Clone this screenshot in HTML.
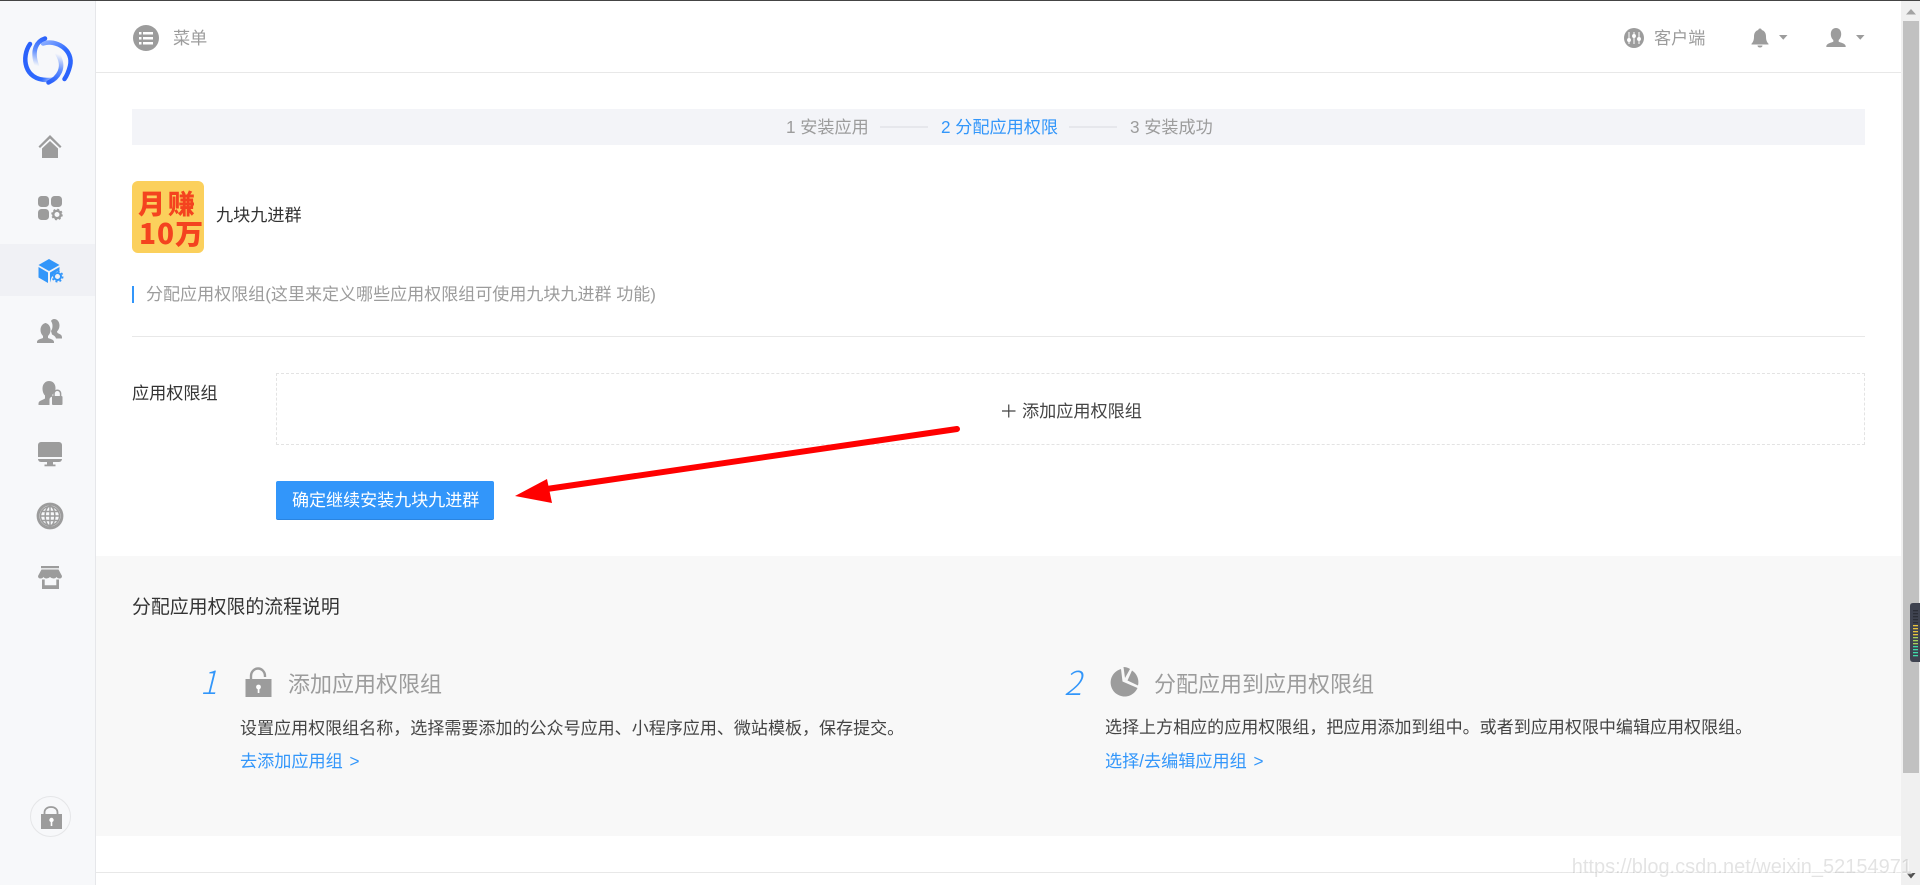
<!DOCTYPE html>
<html lang="zh-CN">
<head>
<meta charset="utf-8">
<title>分配应用权限</title>
<style>
html,body{margin:0;padding:0;width:1920px;height:885px;overflow:hidden;background:#fff}
body{position:relative;font-family:"Liberation Sans","Noto Sans CJK SC",sans-serif;color:#333}
.a{position:absolute}
.t{position:absolute;white-space:nowrap;height:30px;line-height:30px;font-size:17.14px}
.g{color:#9c9c9c}
.b{color:#3296fa}
svg{position:absolute;overflow:visible}
a{color:#3296fa;text-decoration:none;word-spacing:2px}
</style>
</head>
<body>
<!-- sidebar -->
<div class="a" style="left:0;top:0;width:95px;height:885px;background:#f7f8fa;border-right:1px solid #e6e7ea"></div>
<div class="a" style="left:0;top:244px;width:95px;height:52px;background:#f0f1f5"></div>

<!-- main backgrounds -->
<div class="a" style="left:96px;top:72px;width:1805px;height:1px;background:#e8e8e8"></div>
<div class="a" style="left:132px;top:109px;width:1733px;height:36px;background:#f3f4f8"></div>
<div class="a" style="left:132px;top:336px;width:1733px;height:1px;background:#e8e8e8"></div>
<div class="a" style="left:96px;top:556px;width:1805px;height:280px;background:#f8f8f8"></div>
<div class="a" style="left:96px;top:872px;width:1805px;height:1px;background:#e8e8e8"></div>
<div class="a" style="left:0;top:0;width:1920px;height:1px;background:#444"></div>

<!-- logo -->
<svg style="left:0;top:0" width="96" height="96" fill="none" stroke-linecap="round">
<defs>
<linearGradient id="l1" gradientUnits="userSpaceOnUse" x1="26" y1="58" x2="58" y2="80"><stop offset="0" stop-color="#2b62fb"/><stop offset=".65" stop-color="#2f6bff"/><stop offset="1" stop-color="#2f6bff" stop-opacity="0"/></linearGradient>
<linearGradient id="l2" gradientUnits="userSpaceOnUse" x1="42" y1="42" x2="68" y2="78"><stop offset="0" stop-color="#8fb0ff"/><stop offset=".45" stop-color="#2f6bff"/><stop offset="1" stop-color="#2b62fb"/></linearGradient>
<linearGradient id="l3" gradientUnits="userSpaceOnUse" x1="45" y1="38" x2="37" y2="66"><stop offset="0" stop-color="#2b62fb"/><stop offset=".5" stop-color="#2f6bff" stop-opacity=".75"/><stop offset="1" stop-color="#2f6bff" stop-opacity="0"/></linearGradient>
<linearGradient id="l4" gradientUnits="userSpaceOnUse" x1="49" y1="82" x2="58" y2="54"><stop offset="0" stop-color="#2b62fb"/><stop offset=".5" stop-color="#2f6bff" stop-opacity=".75"/><stop offset="1" stop-color="#2f6bff" stop-opacity="0"/></linearGradient>
</defs>
<path d="M30 44C21 57 24 80 47 80Q53 80 58 78.500" stroke="url(#l1)" stroke-width="4.500"/>
<path d="M43 43.500C56 39 74 50 70 66Q68 74 64.500 79" stroke="url(#l2)" stroke-width="4.500"/>
<path d="M45 38.500C37 41 31 50 37 66" stroke="url(#l3)" stroke-width="4.500"/>
<path d="M48.500 82.500C58 78 66 68 57.500 54" stroke="url(#l4)" stroke-width="4.500"/>
</svg>

<!-- sidebar icons -->
<svg style="left:0;top:0" width="96" height="600" fill="#9c9c9c">
<!-- home -->
<path d="M50 135 L38.500 146.500 L40 148 L50 138.500 L60 148 L61.500 146.500Z"/>
<path d="M42 148.500 L50 141 L58 148.500 V158 H42Z"/>
<!-- grid -->
<rect x="38" y="196" width="11" height="11" rx="3.500"/><rect x="51" y="196" width="11" height="11" rx="3.500"/><rect x="38" y="209" width="11" height="11" rx="3.500"/>
<circle cx="57" cy="214.500" r="3.700" fill="none" stroke="#9c9c9c" stroke-width="2.400"/>
<circle cx="57" cy="214.500" r="5" fill="none" stroke="#9c9c9c" stroke-width="1.600" stroke-dasharray="2 1.930"/>
<!-- cube -->
<path d="M49 259 L59.500 265 L49 271 L38.500 265Z" fill="#3296fa"/>
<path d="M38.500 267 L48 272.500 V283 L38.500 277.500Z" fill="#3296fa"/>
<path d="M50 272.500 L59.500 267 V270.500 Q52 273 50.500 281 L50 282.500Z" fill="#3296fa"/>
<circle cx="57.500" cy="276.500" r="3.500" fill="none" stroke="#3296fa" stroke-width="2"/>
<circle cx="57.500" cy="276.500" r="5.200" fill="none" stroke="#3296fa" stroke-width="1.600" stroke-dasharray="2 2.080"/>
<!-- users -->
<path d="M54 319c3.500 0 5.500 3 5.500 6.500 0 2.500-1 4.500-2.500 6l.5 1.500c2 1 4.500 1.500 4.500 4.500v1h-6c-.5-2-2-3-4-4l-1-3.500c1-1.500 1.500-3 1.500-5 0-2-.5-3.500-1.500-5 .8-1.500 2-2 3-2z"/>
<path d="M45.500 323c3.500 0 6 3 6 7 0 2.500-1 4.500-2.500 6v2c2.500 1 6 1.500 6 4v1H38v-1c0-2.500 3.500-3 6-4v-2c-1.500-1.500-2.500-3.500-2.500-6 0-4 2.500-7 6-7z" transform="translate(-1 0)"/>
<!-- user lock -->
<path d="M49 381c4 0 6.500 3 6.500 7 0 3-1.500 5-3 6.500v2c-2 .5-3 1.500-3 3v5.500H38.500v-1.500c0-3 4.500-3.500 6.500-5v-3c-1.500-1.500-2.500-4-2.500-7 0-4.500 3-7.500 6.500-7.500z"/>
<rect x="52" y="396" width="10.500" height="9" rx="1"/>
<path d="M54 396v-2.500a3.300 3.300 0 0 1 6.600 0V396" fill="none" stroke="#9c9c9c" stroke-width="1.500"/>
<!-- monitor -->
<path d="M41 442h18a3 3 0 0 1 3 3v12H38v-12a3 3 0 0 1 3-3z"/>
<path d="M38 459h24v0a3 3 0 0 1-3 3H41a3 3 0 0 1-3-3z"/>
<rect x="47" y="462" width="6" height="3"/><rect x="44.500" y="464.500" width="11" height="1.800"/>
<!-- globe -->
<circle cx="50" cy="516" r="11.700" fill="none" stroke="#9c9c9c" stroke-width="2.400"/>
<g fill="none" stroke="#9c9c9c" stroke-width="1.500">
<circle cx="50" cy="516" r="9.500"/>
<ellipse cx="50" cy="516" rx="4.800" ry="10"/>
<path d="M50 506v20M41 511.500h18M40 516h20M41 520.500h18"/>
</g>
<circle cx="50" cy="516" r="12.900" fill="none" stroke="#9c9c9c" stroke-width="1"/>
<!-- store -->
<rect x="41" y="566" width="18" height="2.200"/>
<path d="M41.500 569.500h17l3.500 6.500q0 2.500-2.500 2.500-2 0-3-1.500-1 1.500-3 1.500t-3.500-1.500q-1.500 1.500-3.500 1.500t-3-1.500q-1 1.500-3 1.500-2.500 0-2.500-2.500z"/>
<path d="M42 579.500v9.500h17v-9.500h-2.700v5.700H44.700v-5.700z"/>
</svg>

<!-- bottom lock -->
<div class="a" style="left:30px;top:796px;width:41px;height:41px;border:1px solid #e5e6e8;border-radius:50%;box-sizing:border-box"></div>
<svg style="left:0;top:780px" width="96" height="60">
<path d="M44.500 35v-2.500c0-3.500 3-5.500 6.500-5.500s6.500 2 6.500 5.500V35" fill="none" stroke="#9c9c9c" stroke-width="1.800"/>
<rect x="41" y="34" width="21" height="15" fill="#9c9c9c"/>
<circle cx="51.500" cy="40" r="2.200" fill="#fff"/><rect x="50.700" y="40" width="1.600" height="6" fill="#fff"/>
</svg>

<!-- header -->
<svg style="left:133px;top:25px" width="26" height="26">
<circle cx="13" cy="13" r="13" fill="#9c9c9c"/>
<g fill="#fff"><rect x="6" y="7" width="2.500" height="2.500"/><rect x="10" y="7" width="10" height="2.500"/><rect x="6" y="12" width="2.500" height="2.500"/><rect x="10" y="12" width="10" height="2.500"/><rect x="6" y="17" width="2.500" height="2.500"/><rect x="10" y="17" width="10" height="2.500"/></g>
</svg>
<div class="t g" style="left:173px;top:23px">菜单</div>

<svg style="left:1624px;top:28px" width="20" height="20">
<circle cx="10" cy="10" r="10" fill="#9c9c9c"/>
<g stroke="#fff" stroke-width="1.300" fill="#fff"><path d="M5 4v12M10 4v12M15 4v12" fill="none" stroke-width="1"/><circle cx="5" cy="12" r="1.300"/><circle cx="10" cy="8" r="1.300"/><circle cx="15" cy="11" r="1.300"/></g>
</svg>
<div class="t g" style="left:1654px;top:23px">客户端</div>

<svg style="left:1750px;top:27px" width="20" height="22" fill="#9c9c9c">
<path d="M10 1.500c1 0 1.700.6 1.700 1.500 3 .8 4.300 3.300 4.300 6.500 0 3.500.8 5.500 2.500 7.300v.7H1.500v-.7C3.200 15 4 13 4 9.500 4 6.300 5.300 3.800 8.300 3c0-.9.700-1.500 1.700-1.500z"/>
<path d="M7.500 18.500h5c0 1.200-1.100 2-2.500 2s-2.500-.8-2.500-2z"/>
</svg>
<svg style="left:1779px;top:35px" width="9" height="6"><path d="M0 0h8.500L4.250 4.800z" fill="#9c9c9c"/></svg>

<svg style="left:1826px;top:27px" width="20" height="22" fill="#9c9c9c">
<path d="M10 1c3.300 0 5.200 2.500 5.200 6 0 2.500-1 4.800-2.500 6v1.800c2.200 1 7 1.700 7 4.700v.5H.3v-.5c0-3 4.800-3.700 7-4.700V13c-1.500-1.200-2.500-3.500-2.500-6 0-3.500 1.900-6 5.200-6z"/>
</svg>
<svg style="left:1856px;top:35px" width="9" height="6"><path d="M0 0h8.500L4.250 4.800z" fill="#9c9c9c"/></svg>

<!-- steps -->
<div class="t g" style="left:786px;top:112px">1 安装应用</div>
<div class="a" style="left:880px;top:126px;width:48px;height:1.500px;background:#e6e7ec"></div>
<div class="t b" style="left:941px;top:112px">2 分配应用权限</div>
<div class="a" style="left:1069px;top:126px;width:48px;height:1.500px;background:#e6e7ec"></div>
<div class="t g" style="left:1130px;top:112px">3 安装成功</div>

<!-- app -->
<div class="a" style="left:132px;top:181px;width:72px;height:72px;background:#fbd05c;border-radius:6px;overflow:hidden">
<div class="t" style="left:6px;top:7px;font-size:27px;font-weight:900;color:#f4431f;letter-spacing:3px;font-family:'Noto Sans CJK SC',sans-serif">月赚</div>
<div class="t" style="left:7px;top:37px;font-size:28px;font-weight:900;color:#f4431f;letter-spacing:1px;font-family:'Noto Sans CJK SC',sans-serif">10万</div>
</div>
<div class="t" style="left:216px;top:200px;color:#333">九块九进群</div>

<div class="a" style="left:132px;top:286px;width:2px;height:17px;background:#3296fa"></div>
<div class="t g" style="left:146px;top:280px;font-size:17.05px">分配应用权限组(这里来定义哪些应用权限组可使用九块九进群 功能)</div>

<!-- form -->
<div class="t" style="left:132px;top:378px;color:#333">应用权限组</div>
<div class="a" style="left:276px;top:373px;width:1589px;height:72px;border:1px dashed #e3e3e3;box-sizing:border-box"></div>
<svg style="left:1002px;top:404px" width="14" height="14"><path d="M0 7h13.500M6.750 .5v13" stroke="#444" stroke-width="1.200" fill="none"/></svg>
<div class="t" style="left:1022px;top:396px;color:#444">添加应用权限组</div>

<div class="a" style="left:276px;top:481px;width:218px;height:39px;background:#3296fa;border-bottom:1px solid #2a84e0;border-radius:2px;box-sizing:border-box"></div>
<div class="t" style="left:292px;top:486px;color:#fff;font-size:17.05px">确定继续安装九块九进群</div>

<!-- arrow -->
<svg style="left:0;top:0" width="1920" height="885">
<path d="M957 429 L540 490" stroke="#f00" stroke-width="6" stroke-linecap="round" fill="none"/>
<path d="M515 496 L547 479 L552 503Z" fill="#f00"/>
</svg>

<!-- lower section -->
<div class="t" style="left:132px;top:593px;font-size:18.900px;color:#333">分配应用权限的流程说明</div>

<div class="t b" style="left:200px;top:666px;font-size:32px;font-style:italic;font-weight:300;font-family:'Noto Sans CJK SC',sans-serif">1</div>
<svg style="left:245px;top:667px" width="27" height="31">
<path d="M6 13V9c0-4 3-7.500 7-7.500S20 5 20 9v1" fill="none" stroke="#9c9c9c" stroke-width="2.400"/>
<rect x="0.500" y="12" width="26" height="18" fill="#9c9c9c"/>
<circle cx="13.500" cy="20" r="2.400" fill="#fff"/><rect x="12.700" y="20" width="1.700" height="6" fill="#fff"/>
</svg>
<div class="t g" style="left:288px;top:670px;font-size:22px">添加应用权限组</div>
<div class="t" style="left:240px;top:714px;color:#444;font-size:17.05px">设置应用权限组名称，选择需要添加的公众号应用、小程序应用、微站模板，保存提交。</div>
<div class="t" style="left:240px;top:746px"><a href="#">去添加应用组 &gt;</a></div>

<div class="t b" style="left:1064px;top:666px;font-size:33px;font-style:italic;font-weight:300;font-family:'Noto Sans CJK SC',sans-serif">2</div>
<svg style="left:1109px;top:667px" width="30" height="30" fill="#9c9c9c">
<path d="M12 2A14 14 0 1 0 28.500 21L13.500 14.500z"/>
<path d="M14.500 0A13 13 0 0 1 21 2L16 11z"/>
<path d="M23 3.500A14 14 0 0 1 29 18.500L18.500 13.500z"/>
</svg>
<div class="t g" style="left:1154px;top:670px;font-size:22px">分配应用到应用权限组</div>
<div class="t" style="left:1105px;top:713px;color:#444;font-size:17.05px">选择上方相应的应用权限组，把应用添加到组中。或者到应用权限中编辑应用权限组。</div>
<div class="t" style="left:1105px;top:746px"><a href="#">选择/去编辑应用组 &gt;</a></div>

<!-- scrollbar -->
<div class="a" style="left:1901px;top:0;width:19px;height:885px;background:#f0f0f0"></div>
<div class="a" style="left:1903px;top:21px;width:16px;height:752px;background:#c1c1c1"></div>
<div class="a" style="left:0;top:0;width:1920px;height:1px;background:#444"></div>
<svg style="left:1901px;top:0" width="19" height="885">
<path d="M5 14.500L10 9L15 14.500z" fill="#a3a3a3"/>
<path d="M5.500 873H14.500L10 878.500z" fill="#505050"/>
</svg>

<!-- small widget -->
<svg style="left:1910px;top:603px" width="10" height="60">
<path d="M10 0H3Q0 0 0 3V55.500Q0 59 3 59H10z" fill="#3f4350"/>
<g fill="#2b2e37"><rect x="3" y="7" width="5" height="1.300"/><rect x="3" y="10" width="5" height="1.300"/><rect x="3" y="13" width="5" height="1.300"/><rect x="3" y="16" width="5" height="1.300"/><rect x="3" y="19" width="5" height="1.300"/></g>
<g fill="#e8c33c"><rect x="3" y="22" width="5" height="1.300"/><rect x="3" y="25" width="5" height="1.300"/><rect x="3" y="28" width="5" height="1.300"/><rect x="3" y="31" width="5" height="1.300"/></g>
<g fill="#a6d35a"><rect x="3" y="34" width="5" height="1.300"/><rect x="3" y="37" width="5" height="1.300"/><rect x="3" y="40" width="5" height="1.300"/></g>
<g fill="#3fdca8"><rect x="3" y="43" width="5" height="1.300"/><rect x="3" y="46" width="5" height="1.300"/><rect x="3" y="49" width="5" height="1.300"/><rect x="3" y="52" width="5" height="1.300"/></g>
</svg>

<!-- watermark -->
<div class="t" style="right:8px;top:852px;font-size:20px;color:rgba(0,0,0,.11);text-shadow:1px 1px 1px rgba(255,255,255,.8)">https://blog.csdn.net/weixin_52154971</div>
</body>
</html>
